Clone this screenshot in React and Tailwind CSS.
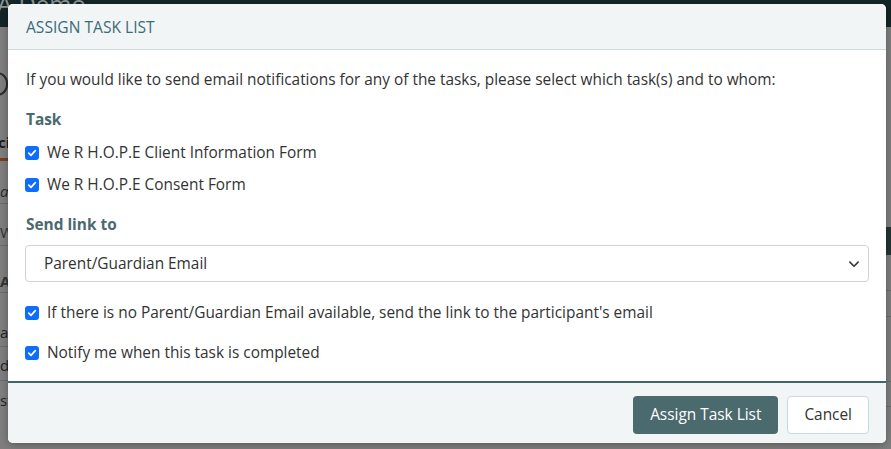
import React from "react";

function Check() {
  return (
    <span className="flex h-[14px] w-[14px] shrink-0 items-center justify-center rounded-[3px] bg-[#0d6efd]">
      <svg width="10" height="10" viewBox="0 0 10 10" fill="none">
        <path d="M1.8 5.2 L4 7.3 L8.3 2.6" stroke="white" strokeWidth="1.8" strokeLinecap="round" strokeLinejoin="round" />
      </svg>
    </span>
  );
}

function CheckRow({ label, className = "" }) {
  return (
    <div className={"flex items-center gap-[8px] h-[22px] " + className}>
      <Check />
      <span className="text-[15.4px] leading-[22px] text-[#333333]">{label}</span>
    </div>
  );
}

function Background() {
  return (
    <div className="flex h-full w-full flex-col bg-[#7f7f7f]">
      <div className="h-[27px] shrink-0 bg-[#132628] overflow-hidden">
        <div className="-mt-[10px] -ml-[3px] text-[24px] leading-[28px] text-[#8d9596]">A Demo</div>
      </div>
      <div className="flex flex-1 justify-between">
        <div className="flex w-[8px] flex-col overflow-hidden text-[15px] text-[#1a1a1a]">
          <div className="mt-[45px] ml-[-14px] h-[24px] w-[22px] shrink-0 rounded-full border-2 border-[#2a2a2a]" />
          <div className="mt-[35px] h-[22px] -ml-[2px] font-bold leading-[22px]">ci</div>
          <div className="mt-[5px] h-[3px] w-full bg-[#7a3f1c]" />
          <div className="mt-[19px] h-[22px] italic leading-[22px] text-[#2a2a2a]">a.</div>
          <div className="mt-[1px] h-px w-full bg-[#6c6c6c]" />
          <div className="mt-[17px] h-[22px] leading-[22px] text-[#333]">W</div>
          <div className="mt-[2px] h-px w-full bg-[#6c6c6c]" />
          <div className="mt-[24px] h-[22px] font-bold leading-[22px] text-[#333]">A</div>
          <div className="h-px w-full bg-[#6c6c6c]" />
          <div className="mt-[28px] h-[22px] leading-[22px] text-[#222]">a</div>
          <div className="mt-[3px] h-px w-full bg-[#6c6c6c]" />
          <div className="mt-[7px] h-[22px] leading-[22px] text-[#222]">df</div>
          <div className="mt-[4px] h-px w-full bg-[#6c6c6c]" />
          <div className="mt-[8px] h-[22px] leading-[22px] text-[#222]">st</div>
        </div>
        <div className="flex w-[5px] flex-col">
          <div className="mt-[200px] h-[28px] bg-[#233536]" />
          <div className="mt-[35px] h-px bg-[#6c6c6c]" />
          <div className="mt-[25px] h-px bg-[#6c6c6c]" />
          <div className="mt-[64px] h-px bg-[#6c6c6c]" />
          <div className="mt-[24px] h-px bg-[#6c6c6c]" />
        </div>
      </div>
    </div>
  );
}

export default function App() {
  return (
    <div
      className="relative h-[449px] w-[891px] overflow-hidden"
      style={{ fontFamily: '"Open Sans", "Noto Sans", sans-serif' }}
    >
      <Background />
      <div className="absolute left-[8px] top-[4px] flex h-[439px] w-[878px] flex-col overflow-hidden rounded-[5px] bg-white shadow-[0_2px_8px_rgba(0,0,0,0.3)]">
        <div className="flex h-[46px] shrink-0 items-center border-b border-[#c9dadd] bg-[#f2f5f6] px-[18px]">
          <span className="text-[15.6px] font-medium leading-[22px] text-[#3b6c76]">ASSIGN TASK LIST</span>
        </div>
        <div className="flex flex-1 flex-col px-[17px] pt-[19px]">
          <p className="text-[15.4px] leading-[22px] text-[#333333] ml-[1px]">
            If you would like to send email notifications for any of the tasks, please select which task(s) and to whom:
          </p>
          <div className="mt-[18px] ml-[1px] text-[15.4px] font-bold leading-[22px] text-[#4a6a6e]">Task</div>
          <CheckRow className="mt-[11px]" label="We R H.O.P.E Client Information Form" />
          <CheckRow className="mt-[10px]" label="We R H.O.P.E Consent Form" />
          <div className="mt-[18px] ml-[1px] text-[15.4px] font-bold leading-[22px] text-[#4a6a6e]">Send link to</div>
          <div className="mt-[9px] flex h-[37px] items-center justify-between rounded-[4px] border border-[#ced4da] bg-white pl-[18px] pr-[8px]">
            <span className="text-[15.4px] leading-[22px] text-[#333333]">Parent/Guardian Email</span>
            <svg width="12" height="12" viewBox="0 0 16 16" fill="none">
              <path d="M2.5 5.5 L8 11 L13.5 5.5" stroke="#343a40" strokeWidth="2.2" strokeLinecap="round" strokeLinejoin="round" />
            </svg>
          </div>
          <CheckRow className="mt-[20px]" label="If there is no Parent/Guardian Email available, send the link to the participant's email" />
          <CheckRow className="mt-[18px]" label="Notify me when this task is completed" />
        </div>
        <div className="flex h-[62px] shrink-0 items-start justify-end gap-[9px] border-t-2 border-[#3f6669] bg-[#f2f5f6] px-[17px] pt-[13px]">
          <button className="h-[38px] rounded-[4px] bg-[#4a6a6d] px-[17px] text-[15.4px] leading-[22px] text-white">
            Assign Task List
          </button>
          <button className="h-[38px] rounded-[4px] border border-[#c5dcdc] bg-white px-[16px] text-[15.4px] leading-[22px] text-[#333333]">
            Cancel
          </button>
        </div>
      </div>
    </div>
  );
}
